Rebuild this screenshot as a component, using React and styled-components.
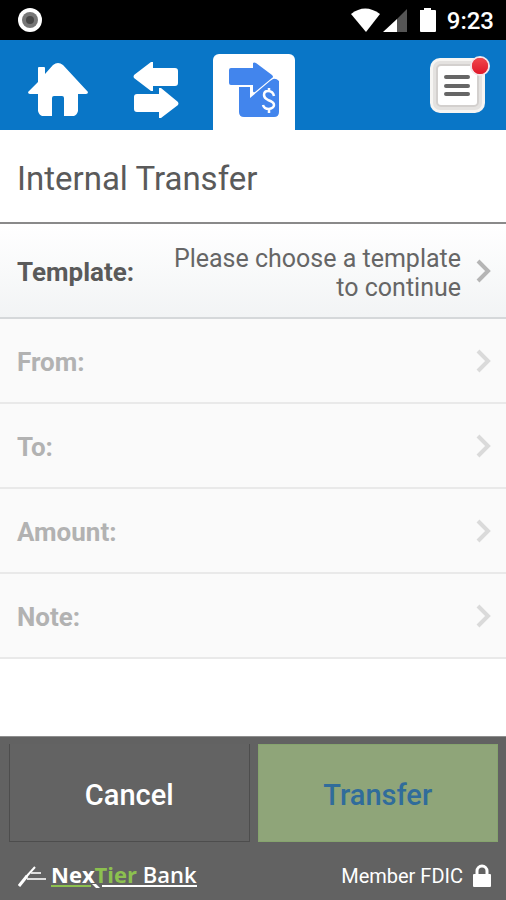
import React from 'react';
import styled, { createGlobalStyle } from 'styled-components';

const GlobalStyle = createGlobalStyle`
  *, *::before, *::after {
    box-sizing: border-box;
  }

  body {
    margin: 0;
    background: #fff;
    font-family: Roboto, "Helvetica Neue", Arial, sans-serif;
  }

  button {
    font-family: inherit;
    cursor: pointer;
  }

  svg {
    display: block;
  }
`;

const Screen = styled.div`
  display: flex;
  flex-direction: column;
  min-height: 100vh;
`;

const StatusBar = styled.div`
  display: flex;
  align-items: center;
  height: 40px;
  padding: 0 12px 0 18px;
  background: #000;
  color: #fff;
`;

const StatusIcons = styled.div`
  display: flex;
  align-items: center;
  margin-left: auto;
`;

const Clock = styled.time`
  margin-left: 11px;
  padding-top: 2px;
  font-size: 24px;
  font-weight: 500;
  line-height: 40px;
`;

const NavBar = styled.nav`
  display: flex;
  align-items: flex-end;
  gap: 16px;
  height: 90px;
  padding: 0 16px 0 17px;
  background: #0976c7;
`;

const Tab = styled.a`
  display: flex;
  justify-content: center;
  align-items: center;
  width: 82px;
  height: 76px;
  padding-bottom: 4px;
  border-radius: 6px 6px 0 0;
  background: ${props => (props.$active ? '#fff' : 'transparent')};
`;

const MenuButton = styled.button`
  align-self: flex-start;
  margin: 14px 0 0 auto;
  padding: 0;
  border: 0;
  background: none;
`;

const Title = styled.h1`
  margin: 0;
  padding: 6px 17px 0;
  border-bottom: 2px solid #8a8a8a;
  font-size: 33px;
  font-weight: 400;
  line-height: 86px;
  color: #5a5a5a;
`;

const Row = styled.button`
  display: flex;
  align-items: center;
  width: 100%;
  height: ${props => (props.$tall ? '95px' : '85px')};
  padding: 0 14px 0 17px;
  border: 0;
  border-bottom: 2px solid ${props => (props.$tall ? '#d5d8da' : '#e9e9e9')};
  background: ${props => (props.$tall ? 'linear-gradient(#fff, #f2f4f5)' : '#fafafa')};
  font-size: 26px;
  line-height: 29px;
  color: ${props => (props.disabled ? '#b2b2b2' : '#5a5a5a')};
`;

const Label = styled.span`
  padding-top: 4px;
  font-weight: 700;
`;

const Value = styled.span`
  flex: 1;
  max-width: 310px;
  margin-left: auto;
  padding: 4px 14px 0 0;
  font-size: 25px;
  text-align: right;
  color: #666;
`;

const Chevron = styled.svg`
  flex: none;
  margin-left: ${props => (props.$pushed ? 'auto' : '0')};
  color: ${props => (props.$pushed ? '#dadada' : '#b5b5b5')};
`;

const Footer = styled.footer`
  margin-top: auto;
  padding: 7px 8px 0 9px;
  border-top: 1px solid #8e8e8e;
  background: #626262;
`;

const Actions = styled.div`
  display: grid;
  grid-template-columns: 1fr 1fr;
  gap: 8px;
`;

const Action = styled.button`
  height: 98px;
  padding: 4px 0 0;
  border: solid ${props => (props.$primary ? '#86a46e' : '#4d4d4d')};
  border-width: ${props => (props.$primary ? '1px' : '0 1px 1px')};
  background: ${props => (props.$primary ? '#8fa579' : '#636363')};
  font-size: 29px;
  font-weight: 500;
  color: ${props => (props.$primary ? '#306c9b' : '#fff')};
`;

const Legal = styled.div`
  display: flex;
  justify-content: space-between;
  align-items: center;
  height: 58px;
  padding: 10px 7px 0 9px;
  color: #fff;
`;

const Brand = styled.div`
  display: flex;
  align-items: center;
`;

const BrandName = styled.div`
  margin-left: 4px;
  font-family: "Open Sans", "Noto Sans", sans-serif;
  font-size: 22px;
  font-weight: 600;
  line-height: 20px;
  white-space: nowrap;
`;

const Strong = styled.span`
  font-weight: 700;
`;

const Accent = styled(Strong)`
  color: #8cc04f;
`;

const Member = styled.span`
  display: flex;
  align-items: center;
  gap: 10px;
  font-size: 20px;
  line-height: 24px;
`;

const HomeIcon = () => (
  <svg width="60" height="54" viewBox="0 0 60 54" fill="#fff">
    <path d="M0 29L10 19V5q0-1 1-1h5q1 0 1 1v6L25 2q5-4 10 0L60 29q0 2-2 2h-8v17q-1 4-4 5h-10V35q0-2-2-2h-8q-2 0-2 2v18H14q-3-1-4-5V31H2q-2 0-2-2z" />
  </svg>
);

const ArrowsIcon = () => (
  <svg width="46" height="58" viewBox="0 0 46 58" fill="#fff">
    <path d="M20 1v6h22q3 0 3 3v12q0 3-3 3H20v5h-2L1 17q-1-1 0-3L18 1z" />
    <path d="M26 57v-6H4q-3 0-3-3V36q0-3 3-3h22v-6h2l17 14q1 2 0 3L28 57z" />
  </svg>
);

const InternalIcon = () => (
  <svg width="52" height="56" viewBox="0 0 52 56">
    <path d="M11 25h11v11l20-17 3-2q3-1 6 2v31q0 5-5 5H16q-5 0-5-5z" fill="#4285ed" />
    <path d="M3 6h22V1q1-1 3 0l16 12q2 2 0 3L27 30q-2 1-2-1v-6H3q-2 0-2-2V8q0-2 2-2z" fill="#4285ed" />
    <path
      d="M46 34q-1-5-6-5-4 0-4 4 0 3 4 5 6 2 6 5t-5 4q-5 0-6-4M41 26v4m0 17v4"
      fill="none"
      stroke="#fff"
      strokeWidth="2.5"
    />
  </svg>
);

const MenuIcon = () => (
  <svg width="62" height="62" viewBox="0 0 62 62">
    <defs>
      <linearGradient id="dot" x1="0" y1="0" x2="0" y2="1">
        <stop offset="0" stopColor="#f0474c" />
        <stop offset="1" stopColor="#e0182a" />
      </linearGradient>
    </defs>
    <rect x="2" y="4" width="55" height="55" rx="10" fill="#f6f5f3" />
    <rect x="5" y="7" width="49" height="49" rx="7" fill="#e4e2e0" />
    <rect x="9" y="11" width="41" height="41" rx="4" fill="#fff" stroke="#d3d0ce" strokeWidth="2" />
    <path d="M18 23h22M18 32h22M18 40h22" stroke="#666" strokeWidth="4" strokeLinecap="round" />
    <circle cx="52" cy="12" r="9" fill="#e52b3b" stroke="#f3e6ea" strokeWidth="2" />
    <circle cx="52" cy="12" r="8" fill="url(#dot)" />
  </svg>
);

const RowChevron = props => (
  <Chevron width="17" height="24" viewBox="0 0 17 24" fill="none" {...props}>
    <path d="M3 2L13 12 3 22" stroke="currentColor" strokeWidth="4" />
  </Chevron>
);

const fields = ['From:', 'To:', 'Amount:', 'Note:'];

export default () => (
  <Screen>
    <GlobalStyle />
    <StatusBar>
      <svg width="24" height="24" viewBox="0 0 24 24">
        <circle cx="12" cy="12" r="12" fill="#fff" />
        <circle cx="12" cy="12" r="8" fill="#777" />
        <circle cx="12" cy="12" r="4" fill="#484848" />
      </svg>
      <StatusIcons>
        <svg width="86" height="26" viewBox="0 0 86 26" fill="#fff">
          <path d="M1 7Q15-4 30 7L16 25z" />
          <path d="M47 12L57 2V25H47z" fill="#555" />
          <path d="M33 25L47 12V25z" />
          <path d="M70 3h4V1h7v2h4q1 0 1 1v20q0 1-1 1H71q-1 0-1-1z" />
        </svg>
        <Clock>9:23</Clock>
      </StatusIcons>
    </StatusBar>
    <NavBar>
      <Tab href="#home" aria-label="Home"><HomeIcon /></Tab>
      <Tab href="#transfers" aria-label="Transfers"><ArrowsIcon /></Tab>
      <Tab $active href="#internal" aria-label="Internal Transfer"><InternalIcon /></Tab>
      <MenuButton type="button" aria-label="Menu"><MenuIcon /></MenuButton>
    </NavBar>
    <main>
      <Title>Internal Transfer</Title>
      <Row $tall type="button">
        <Label>Template:</Label>
        <Value>Please choose a template to continue</Value>
        <RowChevron />
      </Row>
      {fields.map(field => (
        <Row key={field} type="button" disabled>
          <Label>{field}</Label>
          <RowChevron $pushed />
        </Row>
      ))}
    </main>
    <Footer>
      <Actions>
        <Action type="button">Cancel</Action>
        <Action $primary type="button">Transfer</Action>
      </Actions>
      <Legal>
        <Brand>
          <svg width="29" height="22" viewBox="0 0 29 22" fill="none" stroke="#fff">
            <path d="M1 21L9 11" strokeWidth="3" />
            <path d="M8 12L17 2" strokeWidth="2" />
            <path d="M13 8H23M9 14H28" stroke="#ddd" strokeWidth="2" />
          </svg>
          <BrandName>
            <Strong>Nex</Strong><Accent>Tier</Accent> Bank
            <svg width="146" height="4" viewBox="0 0 146 4">
              <path d="M0 2H40" stroke="#8cc04f" strokeWidth="2" />
              <path d="M41 0h4l4 4h-4z" fill="#fff" />
              <path d="M51 2H146" stroke="#fff" strokeWidth="2" />
            </svg>
          </BrandName>
        </Brand>
        <Member>
          Member FDIC
          <svg width="18" height="24" viewBox="0 0 18 24">
            <path d="M4 12V7a5 5 0 0 1 10 0v5" fill="none" stroke="#fff" strokeWidth="3" />
            <rect y="10" width="18" height="13" rx="1" fill="#fff" />
          </svg>
        </Member>
      </Legal>
    </Footer>
  </Screen>
);
